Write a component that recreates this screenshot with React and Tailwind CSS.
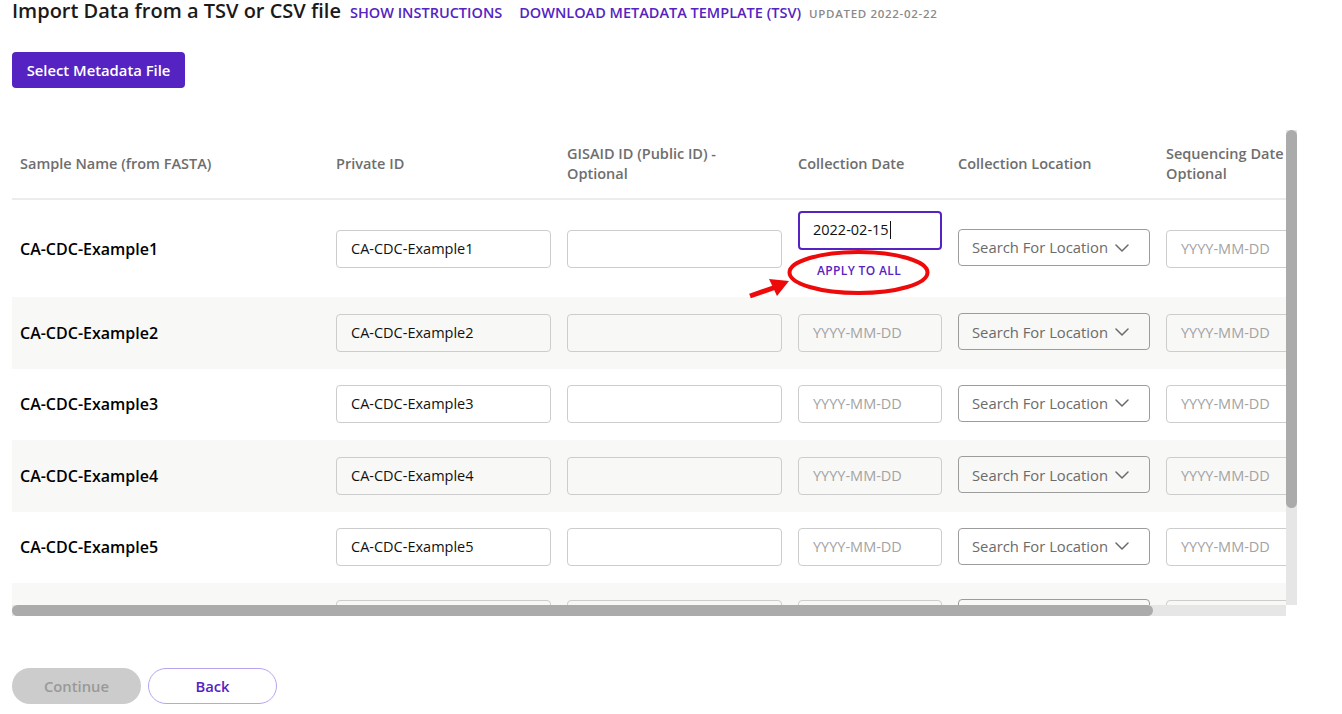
import React from "react";

const SAMPLES = [1, 2, 3, 4, 5, 6].map((n) => `CA-CDC-Example${n}`);

const COLS = "grid grid-cols-[300px_215px_215px_144px_192px_144px] gap-x-4 items-center pl-2 w-max";

function Chevron() {
  return (
    <svg width="14" height="8" viewBox="0 0 14 8" fill="none">
      <path d="M1 1l6 6 6-6" stroke="#6b6b6b" strokeWidth="1.5" strokeLinecap="round" strokeLinejoin="round" />
    </svg>
  );
}

function TextBox({ value, placeholder, wide }) {
  return (
    <div
      className={`h-[38px] rounded-[4px] border border-[#cdcdcd] flex items-center text-[14.5px] ${wide ? "pl-[14px]" : "pl-[14px]"}`}
    >
      {value ? (
        <span className="text-[#111]">{value}</span>
      ) : placeholder ? (
        <span className="text-[#a3a3a3]">{placeholder}</span>
      ) : null}
    </div>
  );
}

function LocationSelect() {
  return (
    <div className="h-[37px] rounded-[4px] border border-[#9c9c9c] flex items-center pl-[13px] gap-[7px] text-[14.8px] text-[#6b6b6b] mb-[2px]">
      <span>Search For Location</span>
      <Chevron />
    </div>
  );
}

function FocusedDate() {
  return (
    <div className="flex flex-col pb-[8px]">
      <div className="h-[39px] rounded-[4px] border-2 border-[#5523c2] flex items-center pl-[13px] text-[14.5px] text-[#111]">
        <span>2022-02-15</span>
        <span className="ml-[1px] w-px h-[18px] bg-[#111]" />
      </div>
      <div className="mt-[13px] pl-[19px] h-[16px] leading-[16px] text-[12px] font-semibold tracking-[0.03em] text-[#5523c2]">
        APPLY TO ALL
      </div>
    </div>
  );
}

function Row({ name, index }) {
  const first = index === 0;
  const shaded = index % 2 === 1;
  return (
    <div className={`${COLS} ${first ? "h-[97px]" : "h-[71.5px]"} ${shaded ? "bg-[#f8f8f7]" : "bg-white"}`}>
      <div className="text-[16px] font-semibold text-black">{name}</div>
      <TextBox value={name} wide />
      <TextBox />
      {first ? <FocusedDate /> : <TextBox placeholder="YYYY-MM-DD" />}
      <LocationSelect />
      <TextBox placeholder="YYYY-MM-DD" />
    </div>
  );
}

export default function App() {
  return (
    <div className="relative min-h-[714px] bg-white px-3 text-[#1a1a1a]" style={{ fontFamily: '"Open Sans", "Noto Sans", sans-serif' }}>
      {/* Page heading and links */}
      <div className="flex items-baseline whitespace-nowrap h-[23px]">
        <h1 className="text-[20px] leading-[22px] font-semibold text-[#1a1a1a]">Import Data from a TSV or CSV file</h1>
        <a className="ml-[9px] text-[14.5px] font-semibold text-[#5523c2]">SHOW INSTRUCTIONS</a>
        <a className="ml-[17px] text-[14.5px] font-semibold text-[#5523c2]">DOWNLOAD METADATA TEMPLATE (TSV)</a>
        <span className="ml-[8px] text-[11.5px] font-semibold tracking-[0.06em] text-[#8a8a8a]">UPDATED 2022-02-22</span>
      </div>

      <button className="mt-[29px] h-[36px] w-[173px] rounded-[4px] bg-[#5523c2] text-white text-[14.8px] font-semibold">
        Select Metadata File
      </button>

      {/* Scrollable metadata table */}
      <div className="mt-[42px] grid grid-cols-[1274px_11px] grid-rows-[475px_11px]">
        <div className="overflow-hidden">
          <div className={`${COLS} h-[70px] border-b-2 border-[#ececec] text-[14.5px] font-semibold text-[#6e6e6e] leading-[20px]`}>
            <div>Sample Name (from FASTA)</div>
            <div>Private ID</div>
            <div>
              GISAID ID (Public ID) -<br />
              Optional
            </div>
            <div>Collection Date</div>
            <div>Collection Location</div>
            <div className="whitespace-nowrap">
              Sequencing Date -<br />
              Optional
            </div>
          </div>
          {SAMPLES.map((s, i) => (
            <Row key={s} name={s} index={i} />
          ))}
        </div>
        <div className="bg-[#e6e6e6] flex flex-col">
          <div className="h-[378px] rounded-full bg-[#ababab]" />
        </div>
        <div className="bg-[#e6e6e6] flex">
          <div className="w-[1141px] rounded-full bg-[#ababab]" />
        </div>
        <div />
      </div>

      {/* Footer actions */}
      <div className="mt-[52px] flex gap-[7px]">
        <button className="h-[36px] w-[129px] rounded-full bg-[#cccccc] text-[14.8px] font-semibold text-[#999999]">Continue</button>
        <button className="h-[36px] w-[129px] rounded-full border border-[#b9a3ef] bg-white text-[14.8px] font-semibold text-[#5523c2]">Back</button>
      </div>

      {/* Red callout around "Apply to all" */}
      <svg className="absolute left-0 top-0 pointer-events-none" width="1342" height="714">
        <ellipse cx="858.5" cy="272.5" rx="69" ry="20.5" fill="none" stroke="#ee0a0a" strokeWidth="4" />
        <line x1="750" y1="296" x2="776" y2="287" stroke="#ee0a0a" strokeWidth="5" />
        <polygon points="789,281 769,279 777,296" fill="#ee0a0a" />
      </svg>
    </div>
  );
}
